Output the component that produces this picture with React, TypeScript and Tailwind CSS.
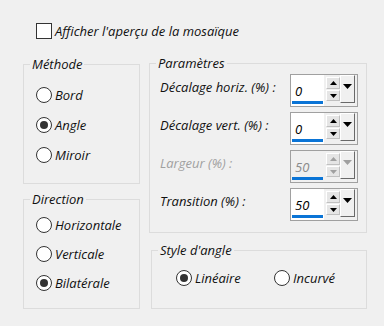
import React from "react";

const FONT = { fontFamily: "'Open Sans', 'Noto Sans', sans-serif" };

function Radio({ label, checked }: { label: string; checked?: boolean }) {
  return (
    <div className="flex items-center h-[16px]">
      <div className="w-[16px] h-[16px] rounded-full border border-[#333333] bg-white flex items-center justify-center shrink-0">
        {checked && <div className="w-[8px] h-[8px] rounded-full bg-[#333333]" />}
      </div>
      <span className="ml-[3px] leading-[16px] whitespace-nowrap">{label}</span>
    </div>
  );
}

function Legend({ text }: { text: string }) {
  return (
    <div className="-mt-[9px] ml-[6px] px-[2px] w-fit bg-[#f0f0f0] leading-[16px] whitespace-nowrap">
      {text}
    </div>
  );
}

function Tri({ up, color }: { up?: boolean; color: string }) {
  return (
    <svg width="7" height="4" viewBox="0 0 7 4">
      {up ? <polygon points="0,4 7,4 3.5,0" fill={color} /> : <polygon points="0,0 7,0 3.5,4" fill={color} />}
    </svg>
  );
}

function Spinner({ value, disabled }: { value: string; disabled?: boolean }) {
  const arrow = disabled ? "#a0a0a0" : "#000000";
  return (
    <div className="w-[68px] h-[33px] border border-[#a0a0a0] bg-[#f0f0f0] flex">
      <div className={`w-[33px] h-full flex flex-col ${disabled ? "bg-[#f0f0f0]" : "bg-white"}`}>
        <div className={`flex-1 pl-[4px] pt-[8px] leading-[16px] ${disabled ? "text-[#8a8a8a]" : "text-black"}`}>{value}</div>
        <div className="h-[3px] mx-[1px] mb-[2px] bg-[#0a74d6]" />
      </div>
      <div className="ml-[2px] mt-[2px] w-[14px] flex flex-col gap-[1px]">
        <div className="h-[12px] bg-[#e5e5e5] border-t border-l border-white border-r border-b border-r-[#c0c0c0] border-b-[#c0c0c0] flex items-center justify-center">
          <Tri up color={arrow} />
        </div>
        <div className="h-[11px] bg-[#e5e5e5] border-t border-l border-white border-r border-b border-r-[#c0c0c0] border-b-[#c0c0c0] flex items-center justify-center">
          <Tri color={arrow} />
        </div>
      </div>
      <div className="w-[15px] h-[28px] bg-[#f0f0f0] border-t border-l border-[#ffffff] border-r border-b border-r-[#696969] border-b-[#696969] flex justify-center pt-[8px]">
        <svg width="9" height="5" viewBox="0 0 9 5">
          <polygon points="0,0 9,0 4.5,5" fill={arrow} />
        </svg>
      </div>
    </div>
  );
}

function Row({ label, value, disabled }: { label: string; value: string; disabled?: boolean }) {
  return (
    <div className="flex items-center h-[33px]">
      <div className={`w-[130px] pb-[6px] whitespace-nowrap ${disabled ? "text-[#a0a0a0]" : ""}`}>{label}</div>
      <Spinner value={value} disabled={disabled} />
    </div>
  );
}

export default function App() {
  return (
    <div className="w-[384px] h-[326px] bg-[#f0f0f0] italic text-[13px] text-[#111111] overflow-hidden" style={FONT}>
      <div className="pt-[23px] pl-[36px] flex items-center">
        <div className="w-[16px] h-[16px] border border-[#333333] bg-white shrink-0" />
        <span className="ml-[3px] leading-[16px] whitespace-nowrap">Afficher l'aperçu de la mosaïque</span>
      </div>
      <div className="flex mt-[24px] pl-[23px]">
        <div className="w-[117px] flex flex-col">
          <div className="mt-[1px] h-[120px] border border-[#dcdcdc]">
            <Legend text="Méthode" />
            <div className="mt-[15px] pl-[12px] flex flex-col gap-[14px]">
              <Radio label="Bord" />
              <Radio label="Angle" checked />
              <Radio label="Miroir" />
            </div>
          </div>
          <div className="mt-[15px] h-[110px] border border-[#dcdcdc]">
            <Legend text="Direction" />
            <div className="mt-[10px] pl-[12px] flex flex-col gap-[13px]">
              <Radio label="Horizontale" />
              <Radio label="Verticale" />
              <Radio label="Bilatérale" checked />
            </div>
          </div>
        </div>
        <div className="ml-[9px] w-[218px] flex flex-col">
          <div className="h-[170px] border border-[#dcdcdc]">
            <Legend text="Paramètres" />
            <div className="mt-[3px] pl-[10px] flex flex-col gap-[5px]">
              <Row label="Décalage horiz. (%) :" value="0" />
              <Row label="Décalage vert. (%) :" value="0" />
              <Row label="Largeur (%) :" value="50" disabled />
              <Row label="Transition (%) :" value="50" />
            </div>
          </div>
          <div className="mt-[17px] ml-[2px] w-[216px] h-[59px] border border-[#dcdcdc]">
            <Legend text="Style d'angle" />
            <div className="mt-[12px] pl-[24px] flex">
              <div className="w-[98px]">
                <Radio label="Linéaire" checked />
              </div>
              <Radio label="Incurvé" />
            </div>
          </div>
        </div>
      </div>
    </div>
  );
}
